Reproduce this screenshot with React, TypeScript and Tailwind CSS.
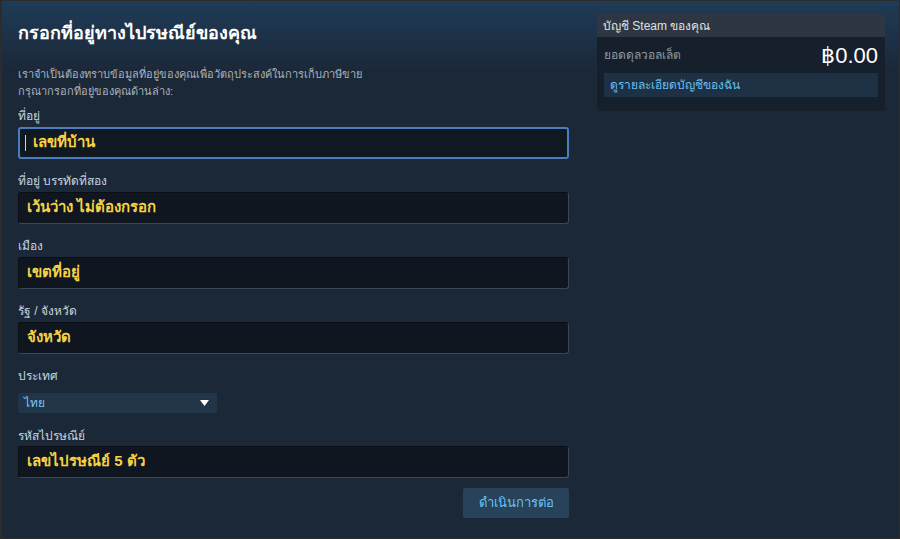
const FIELDS_TOP = [
  { label: "ที่อยู่", value: "เลขที่บ้าน", focused: true },
  { label: "ที่อยู่ บรรทัดที่สอง", value: "เว้นว่าง ไม่ต้องกรอก" },
  { label: "เมือง", value: "เขตที่อยู่" },
  { label: "รัฐ / จังหวัด", value: "จังหวัด" },
];

function Label({ text, className = "" }: { text: string; className?: string }) {
  return <div className={`h-[16px] text-[12px] leading-[16px] text-[#c6d4df] ${className}`}>{text}</div>;
}

function Field({ label, value, focused }: { label: string; value: string; focused?: boolean }) {
  return (
    <div className="mb-[14px]">
      <Label text={label} className="mb-[3px]" />
      <div
        className={
          focused
            ? "h-[32px] rounded-[3px] border-2 border-[#4a7cbf] bg-[#101822] flex items-center pl-[5px]"
            : "h-[32px] rounded-[3px] border border-[#0b0f15] border-b-[#3b4656] border-r-[#3b4656] bg-[#0f1620] flex items-center pl-[8px]"
        }
      >
        {focused && <span className="w-px h-[16px] bg-[#c6d4df] mr-[7px]" />}
        <span className="h-[32px] leading-[30px] text-[15px] font-bold text-[#f5d245]">{value}</span>
      </div>
    </div>
  );
}

export default function App() {
  return (
    <div
      className="w-[900px] h-[539px] border border-[#2c2c2c] border-l-2 bg-[#1b2838] bg-[linear-gradient(to_bottom,#1f3b57_0px,#1b2838_70px,#1b2838_100%)] text-white overflow-hidden"
      style={{ fontFamily: '"Liberation Sans", "Noto Sans", Arial, sans-serif' }}
    >
      <div className="flex pt-[13px]">
        {/* Address form */}
        <div className="w-[551px] ml-[16px]">
          <h1 className="h-[24px] text-[18px] leading-[24px] font-bold text-white mt-[7px] mb-[21px]">กรอกที่อยู่ทางไปรษณีย์ของคุณ</h1>
          <p className="text-[11px] leading-[17px] text-[#acb2b8] mb-[8px]">
            <span className="block h-[17px]">เราจำเป็นต้องทราบข้อมูลที่อยู่ของคุณเพื่อวัตถุประสงค์ในการเก็บภาษีขาย</span>
            <span className="block h-[17px]">กรุณากรอกที่อยู่ของคุณด้านล่าง:</span>
          </p>

          {FIELDS_TOP.map((f) => (
            <Field key={f.label} {...f} />
          ))}

          <Label text="ประเทศ" className="mb-[9px]" />
          <div className="w-[199px] h-[20px] rounded-[2px] bg-[#213548] flex items-center justify-between pl-[6px] pr-[8px] mb-[15px]">
            <span className="text-[12px] leading-[20px] text-[#7cc6f4]">ไทย</span>
            <svg width="9" height="6" viewBox="0 0 9 6">
              <path d="M0 0h9L4.5 6z" fill="#ffffff" />
            </svg>
          </div>

          <Label text="รหัสไปรษณีย์" className="mb-[2px]" />
          <div className="h-[32px] rounded-[3px] border border-[#0b0f15] border-b-[#3b4656] border-r-[#3b4656] bg-[#0f1620] flex items-center pl-[8px]">
            <span className="h-[32px] leading-[30px] text-[15px] font-bold text-[#f5d245]">เลขไปรษณีย์ 5 ตัว</span>
          </div>

          <div className="flex justify-end mt-[10px]">
            <button className="w-[106px] h-[30px] rounded-[2px] bg-[#274259] text-[13px] leading-[30px] text-[#67c1f5]">
              ดำเนินการต่อ
            </button>
          </div>
        </div>

        {/* Account sidebar */}
        <div className="w-[288px] ml-[28px] bg-[#16202d] pb-[14px] self-start">
          <div className="h-[23px] bg-[#2d3642] flex items-center px-[6px] text-[12px] text-[#dfe3e6]">
            บัญชี Steam ของคุณ
          </div>
          <div className="px-[7px]">
            <div className="flex items-center justify-between h-[36px]">
              <span className="text-[12px] text-[#8f98a0]">ยอดดุลวอลเล็ต</span>
              <span className="text-[22px] text-white">฿0.00</span>
            </div>
            <div className="h-[24px] bg-[#1e3144] flex items-center px-[6px] text-[12px] text-[#66c0f4]">
              ดูรายละเอียดบัญชีของฉัน
            </div>
          </div>
        </div>
      </div>
    </div>
  );
}
